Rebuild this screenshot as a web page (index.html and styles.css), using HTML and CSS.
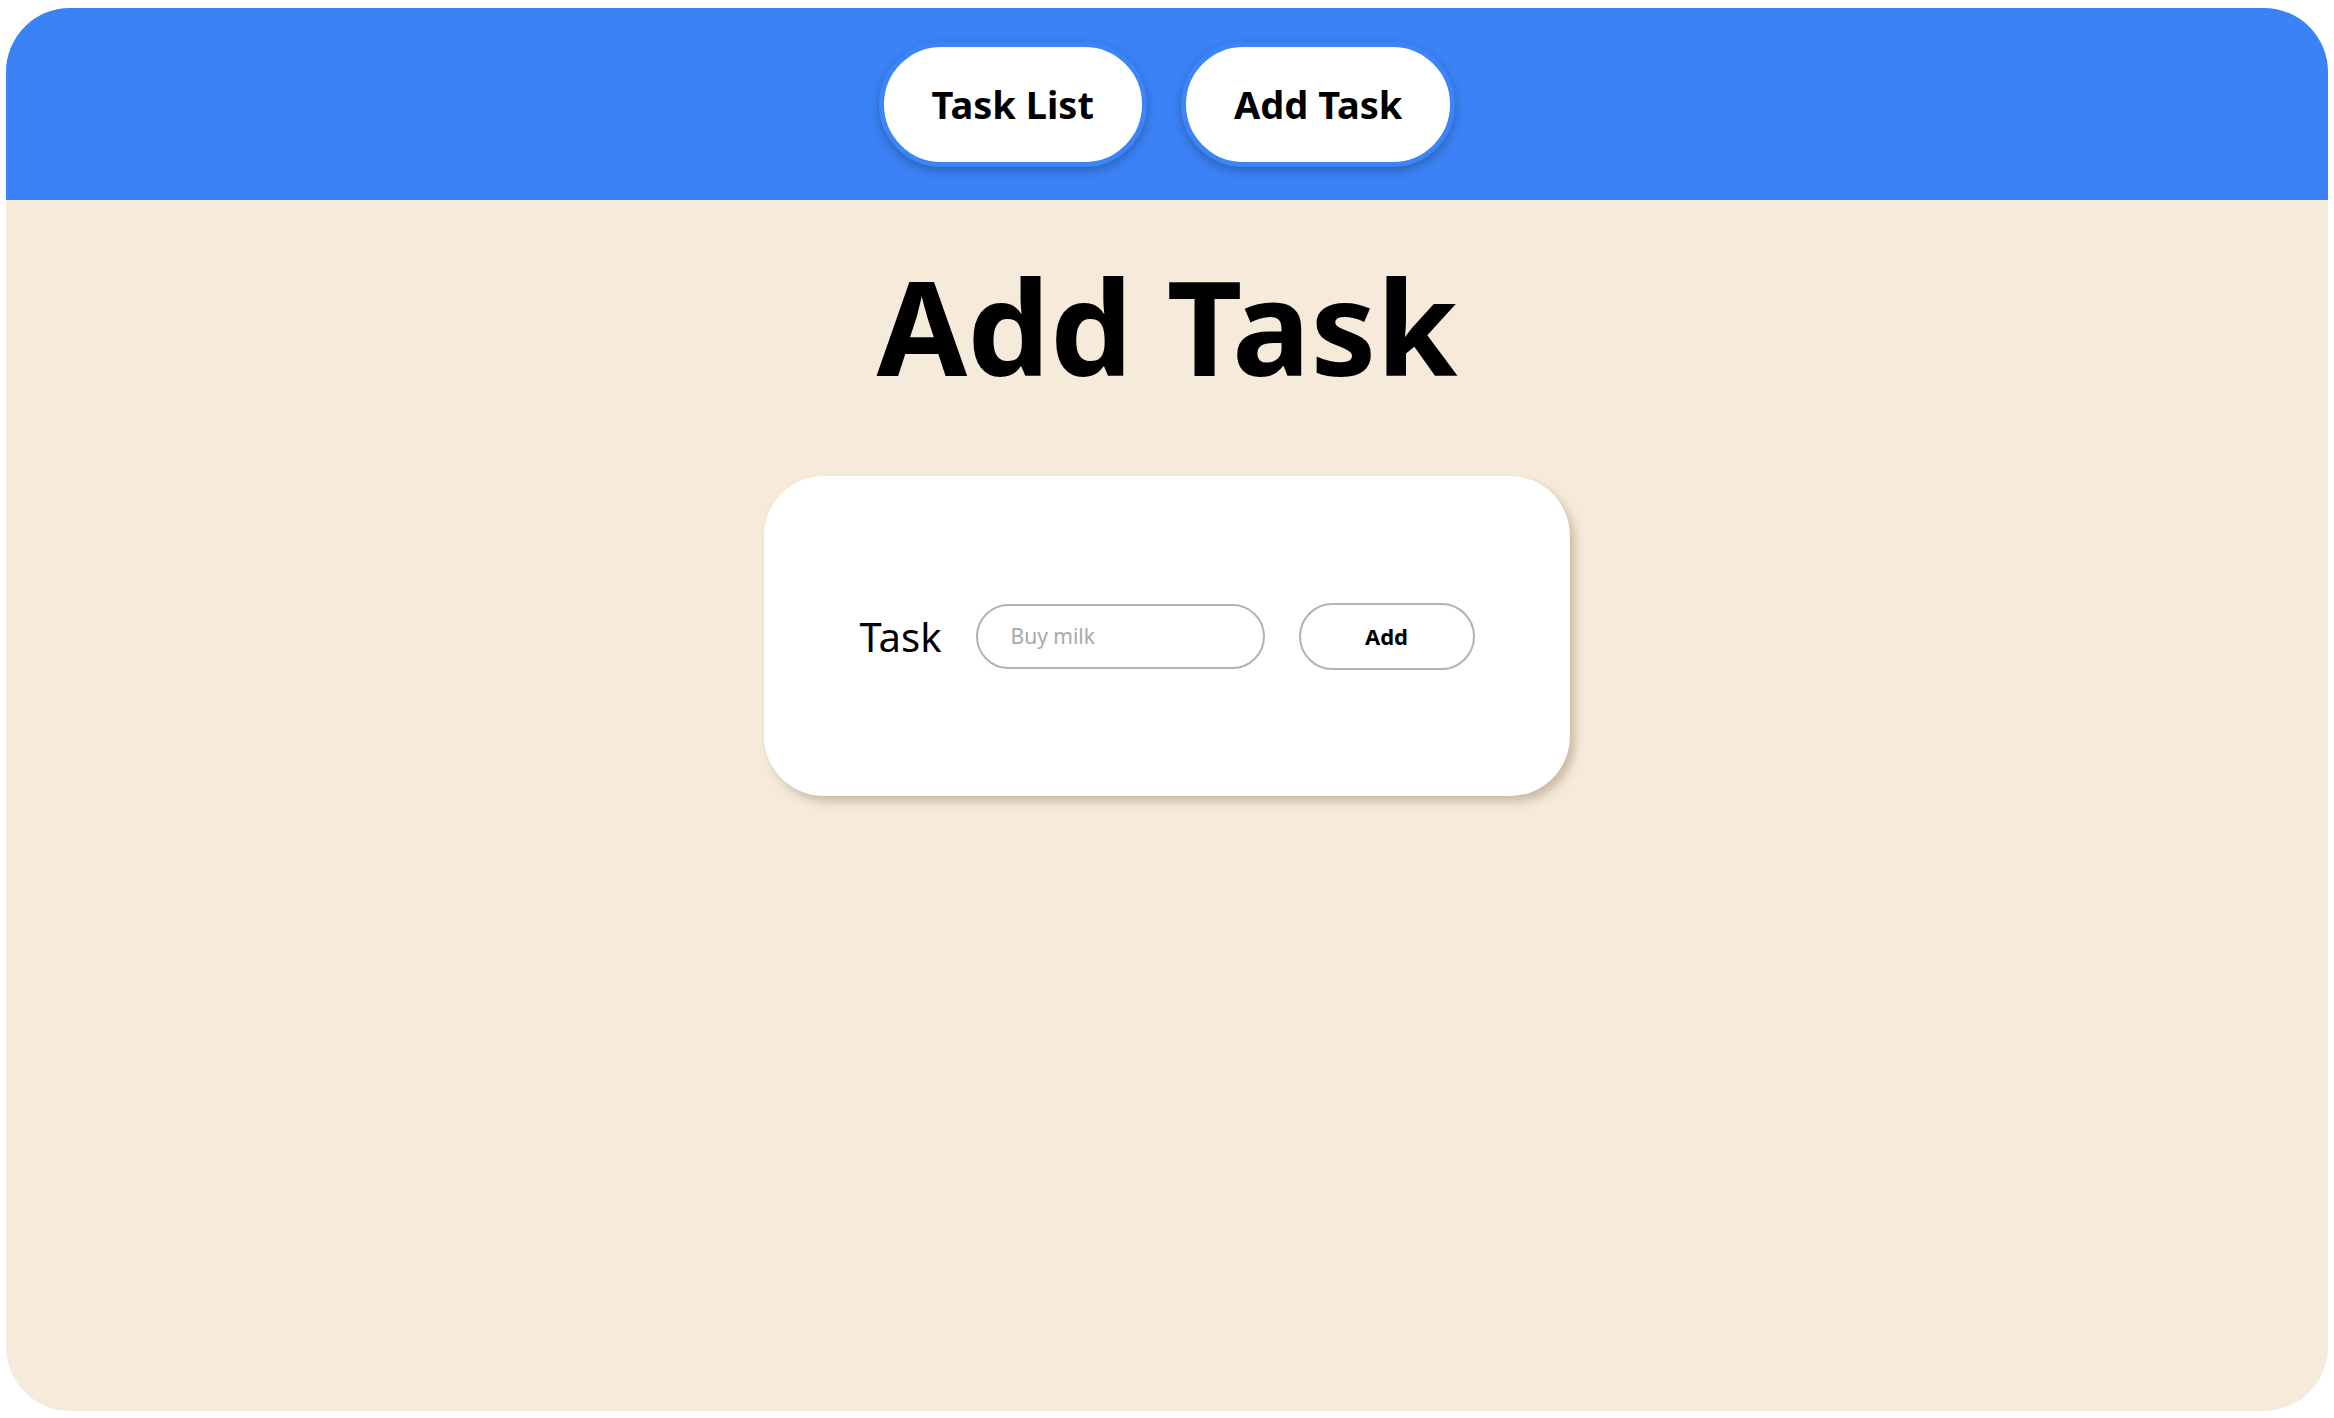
FILE: index.html
```html
<!DOCTYPE html>
<html lang="en">
<head>
<meta charset="utf-8">
<title>Add Task</title>
<link rel="stylesheet" href="styles.css">
</head>
<body>
<div class="app">
  <header class="topbar">
    <nav class="nav">
      <a class="nav-btn" href="#">Task List</a>
      <a class="nav-btn" href="#">Add Task</a>
    </nav>
  </header>
  <main class="main">
    <h1 class="title">Add Task</h1>
    <form class="card">
      <label class="label" for="task">Task</label>
      <input class="input" id="task" type="text" placeholder="Buy milk">
      <button class="add-btn" type="button">Add</button>
    </form>
  </main>
</div>
</body>
</html>
```

FILE: styles.css
```css
html, body {
  margin: 0;
  padding: 0;
  background: #ffffff;
}

body {
  font-family: "Comic Sans MS", "Noto Sans", sans-serif;
  color: #000;
}

.app {
  margin: 8px 6px 0 6px;
  height: 1403px;
  border-radius: 64px;
  overflow: hidden;
  background: #f6ebdb;
  display: flex;
  flex-direction: column;
}

.topbar {
  height: 192px;
  flex: none;
  background: #3b82f6;
  display: flex;
  align-items: center;
  justify-content: center;
}

.nav {
  display: flex;
  gap: 34px;
  align-items: center;
}

.nav-btn {
  box-sizing: border-box;
  height: 125px;
  display: flex;
  align-items: center;
  padding: 0 48px;
  border: 5px solid #3c85f7;
  border-radius: 999px;
  background: #ffffff;
  color: #000;
  text-decoration: none;
  font-weight: 700;
  font-size: 38px;
  box-shadow: 0 4px 10px rgba(0, 0, 0, 0.25);
}

.main {
  display: flex;
  flex-direction: column;
  align-items: center;
}

.title {
  margin: 60px 0 0 0;
  font-size: 131px;
  line-height: 1;
  font-weight: 700;
}

.card {
  box-sizing: border-box;
  margin-top: 85px;
  width: 806px;
  height: 320px;
  border-radius: 60px;
  background: #ffffff;
  box-shadow: 5px 6px 10px rgba(120, 100, 70, 0.35);
  display: flex;
  align-items: center;
  justify-content: center;
  gap: 34px;
}

.label {
  font-size: 40px;
}

.input {
  box-sizing: border-box;
  width: 289px;
  height: 65px;
  border: 2px solid #b3b3b3;
  border-radius: 999px;
  padding: 0 20px 0 33px;
  font-family: inherit;
  font-size: 21px;
  color: #000;
  background: #fff;
  outline: none;
}

.input::placeholder {
  color: #a9a9a9;
}

.add-btn {
  box-sizing: border-box;
  width: 176px;
  height: 67px;
  border: 2px solid #b3b3b3;
  border-radius: 999px;
  background: #fff;
  font-family: inherit;
  font-weight: 700;
  font-size: 22px;
  color: #000;
}
```
